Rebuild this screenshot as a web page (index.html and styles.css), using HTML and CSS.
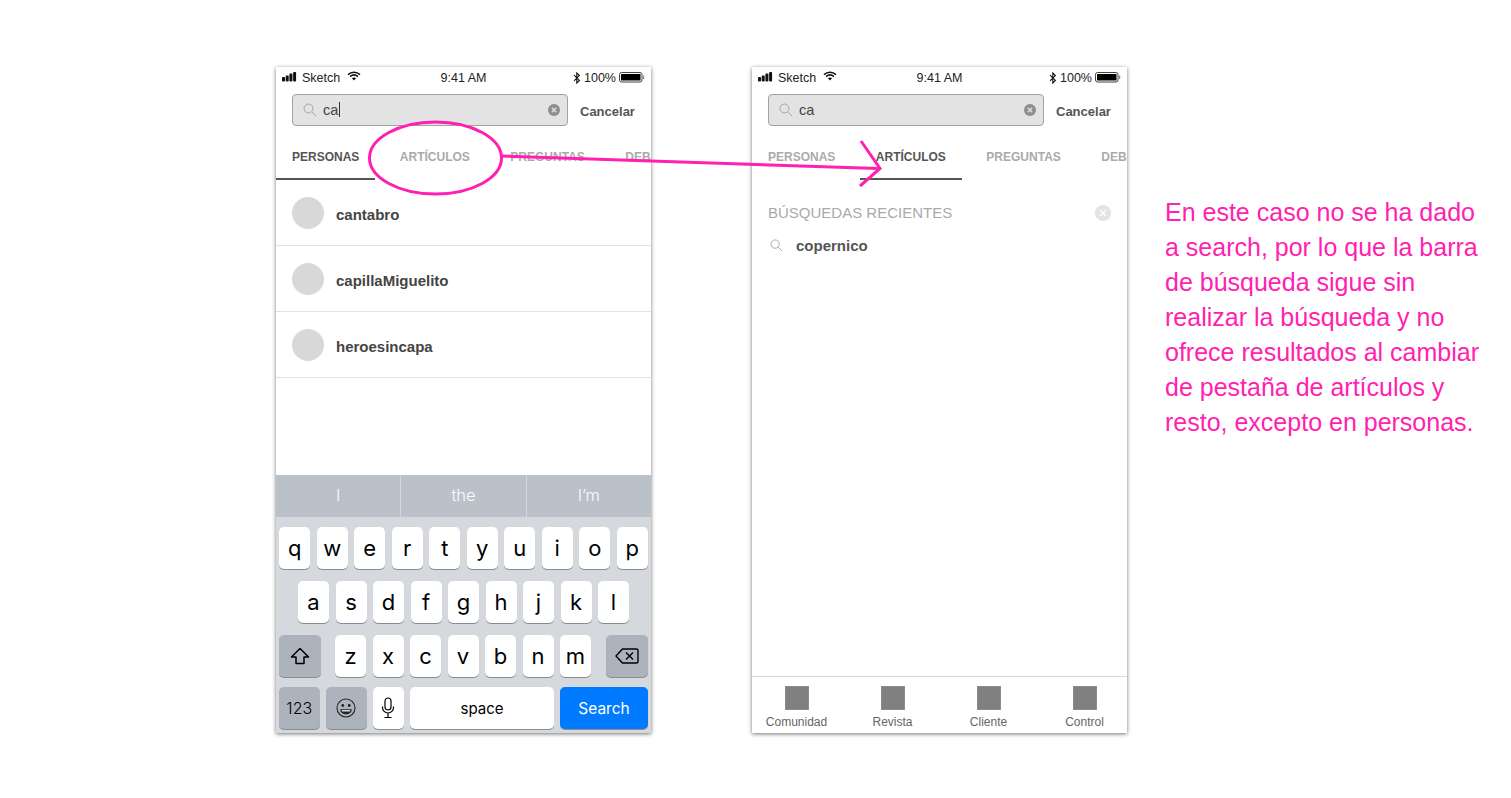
FILE: index.html
```html
<!DOCTYPE html>
<html lang="en">
<head>
    <meta charset="UTF-8">
    <title>Búsqueda</title>
    <link rel="stylesheet" href="styles.css">
</head>
<body>
    <div class="canvas">
        <section class="phone">
            <div class="status-bar">
                <div class="status-left">
                    <svg class="signal" viewBox="0 0 17 10" width="17" height="10"><rect x="0" y="5" width="3" height="4.500" rx="1"/><rect x="3.700" y="3.500" width="3" height="6" rx="1"/><rect x="7.400" y="1.500" width="3" height="8" rx="1"/><rect x="11.100" y="0" width="3" height="9.500" rx="1"/></svg>
                    <span>Sketch</span>
                    <svg class="wifi" viewBox="0 0 14 10" width="14" height="10"><path d="M1 3.600C4.400.5 9.600.5 13 3.600M3.100 5.600c2.300-2 5.500-2 7.800 0" fill="none" stroke="#111" stroke-width="1.500"/><path d="M4.900 7.200c1.300-1 2.900-1 4.200 0L7 9.600z" fill="#111"/></svg>
                </div>
                <span class="status-time">9:41 AM</span>
                <div class="status-right">
                    <svg viewBox="0 0 8 12" width="8" height="12"><path d="M1 3.200l5.400 5.200L3.800 11V1l2.600 2.600L1 8.800" fill="none" stroke="#111" stroke-width="1.100"/></svg>
                    <span>100%</span>
                    <svg viewBox="0 0 26 11" width="26" height="11"><rect x=".5" y=".5" width="22.500" height="9.500" rx="2" fill="#fff" stroke="#444"/><rect x="2" y="2" width="19.500" height="6.500" fill="#000"/><rect x="24" y="3.500" width="1.200" height="3.500" fill="#888"/></svg>
                </div>
            </div>
            <div class="search-row">
                <div class="search-box">
                    <svg class="search-icon" viewBox="0 0 14 14" width="14" height="14"><circle cx="5.500" cy="5.500" r="4.500"/><path d="M8.800 8.800l4.400 4.400"/></svg>
                    <span class="search-text">ca<i class="caret"></i></span>
                    <svg class="clear-icon" viewBox="0 0 12 12" width="12" height="12"><circle cx="6" cy="6" r="6" fill="#8e8e8e"/><path d="M3.800 3.800l4.400 4.400M8.200 3.800l-4.400 4.400" stroke="#e3e3e3" stroke-width="1.300"/></svg>
                </div>
                <span class="cancel">Cancelar</span>
            </div>
            <nav class="tabs">
                <span class="tab active">PERSONAS</span>
                <span class="tab">ARTÍCULOS</span>
                <span class="tab">PREGUNTAS</span>
                <span class="tab">DEBATES</span>
            </nav>
            <ul class="people">
                <li class="person"><span class="avatar"></span>cantabro</li>
                <li class="person"><span class="avatar"></span>capillaMiguelito</li>
                <li class="person"><span class="avatar"></span>heroesincapa</li>
            </ul>
            <div class="keyboard">
                <div class="suggestions">
                    <span>I</span>
                    <span>the</span>
                    <span>I’m</span>
                </div>
                <div class="keys">
                    <div class="key-row">
                        <span class="key">q</span><span class="key">w</span><span class="key">e</span><span class="key">r</span><span class="key">t</span><span class="key">y</span><span class="key">u</span><span class="key">i</span><span class="key">o</span><span class="key">p</span>
                    </div>
                    <div class="key-row">
                        <span class="key">a</span><span class="key">s</span><span class="key">d</span><span class="key">f</span><span class="key">g</span><span class="key">h</span><span class="key">j</span><span class="key">k</span><span class="key">l</span>
                    </div>
                    <div class="key-row row-shift">
                        <span class="key dark wide">
                            <svg viewBox="0 0 20 18" width="20" height="18"><path d="M10 1.500L1.500 10H6v6.500h8V10h4.500z" fill="none" stroke="#000" stroke-width="1.500" stroke-linejoin="round"/></svg>
                        </span>
                        <div class="shift-letters">
                            <span class="key">z</span><span class="key">x</span><span class="key">c</span><span class="key">v</span><span class="key">b</span><span class="key">n</span><span class="key">m</span>
                        </div>
                        <span class="key dark wide">
                            <svg viewBox="0 0 24 16" width="24" height="16"><path d="M7.500 1h14a1.500 1.500 0 0 1 1.500 1.500v11a1.500 1.500 0 0 1-1.500 1.500h-14L1 8z" fill="none" stroke="#000" stroke-width="1.400" stroke-linejoin="round"/><path d="M11 4.500l7 7M18 4.500l-7 7" stroke="#000" stroke-width="1.400"/></svg>
                        </span>
                    </div>
                    <div class="key-row row-bottom">
                        <span class="key dark key-num">123</span>
                        <span class="key dark key-emoji">
                            <svg viewBox="0 0 20 20" width="20" height="20"><circle cx="10" cy="10" r="9" fill="none" stroke="#222" stroke-width="1.100"/><circle cx="6.800" cy="7.500" r="1.400" fill="#222"/><circle cx="13.200" cy="7.500" r="1.400" fill="#222"/><path d="M4.300 11.200h11.400c0 3.200-2.500 5-5.700 5s-5.700-1.800-5.700-5z" fill="#222"/><path d="M5.600 12h8.800l-.5 1.400H6.100z" fill="#d8dade"/></svg>
                        </span>
                        <span class="key key-mic">
                            <svg viewBox="0 0 14 22" width="14" height="22"><rect x="4" y="1" width="6" height="12" rx="3" fill="none" stroke="#000" stroke-width="1.200"/><path d="M1.500 9.500v1a5.500 5.500 0 0 0 11 0v-1M7 16v4.500M3.500 20.500h7" fill="none" stroke="#000" stroke-width="1.200"/></svg>
                        </span>
                        <span class="key key-space">space</span>
                        <span class="key key-search">Search</span>
                    </div>
                </div>
            </div>
        </section>

        <section class="phone phone-right">
            <div class="status-bar">
                <div class="status-left">
                    <svg class="signal" viewBox="0 0 17 10" width="17" height="10"><rect x="0" y="5" width="3" height="4.500" rx="1"/><rect x="3.700" y="3.500" width="3" height="6" rx="1"/><rect x="7.400" y="1.500" width="3" height="8" rx="1"/><rect x="11.100" y="0" width="3" height="9.500" rx="1"/></svg>
                    <span>Sketch</span>
                    <svg class="wifi" viewBox="0 0 14 10" width="14" height="10"><path d="M1 3.600C4.400.5 9.600.5 13 3.600M3.100 5.600c2.300-2 5.500-2 7.800 0" fill="none" stroke="#111" stroke-width="1.500"/><path d="M4.900 7.200c1.300-1 2.900-1 4.200 0L7 9.600z" fill="#111"/></svg>
                </div>
                <span class="status-time">9:41 AM</span>
                <div class="status-right">
                    <svg viewBox="0 0 8 12" width="8" height="12"><path d="M1 3.200l5.400 5.200L3.800 11V1l2.600 2.600L1 8.800" fill="none" stroke="#111" stroke-width="1.100"/></svg>
                    <span>100%</span>
                    <svg viewBox="0 0 26 11" width="26" height="11"><rect x=".5" y=".5" width="22.500" height="9.500" rx="2" fill="#fff" stroke="#444"/><rect x="2" y="2" width="19.500" height="6.500" fill="#000"/><rect x="24" y="3.500" width="1.200" height="3.500" fill="#888"/></svg>
                </div>
            </div>
            <div class="search-row">
                <div class="search-box">
                    <svg class="search-icon" viewBox="0 0 14 14" width="14" height="14"><circle cx="5.500" cy="5.500" r="4.500"/><path d="M8.800 8.800l4.400 4.400"/></svg>
                    <span class="search-text">ca</span>
                    <svg class="clear-icon" viewBox="0 0 12 12" width="12" height="12"><circle cx="6" cy="6" r="6" fill="#8e8e8e"/><path d="M3.800 3.800l4.400 4.400M8.200 3.800l-4.400 4.400" stroke="#e3e3e3" stroke-width="1.300"/></svg>
                </div>
                <span class="cancel">Cancelar</span>
            </div>
            <nav class="tabs">
                <span class="tab">PERSONAS</span>
                <span class="tab active">ARTÍCULOS</span>
                <span class="tab">PREGUNTAS</span>
                <span class="tab">DEBATES</span>
            </nav>
            <div class="recent">
                <div class="recent-head">
                    <span>BÚSQUEDAS RECIENTES</span>
                    <svg viewBox="0 0 16 16" width="16" height="16"><circle cx="8" cy="8" r="8" fill="#e3e3e3"/><path d="M5 5l6 6M11 5l-6 6" stroke="#fff" stroke-width="1.300"/></svg>
                </div>
                <div class="recent-item">
                    <svg class="search-icon" viewBox="0 0 14 14" width="13" height="13"><circle cx="5.500" cy="5.500" r="4.500"/><path d="M8.800 8.800l4.400 4.400"/></svg>
                    <span>copernico</span>
                </div>
            </div>
            <div class="tabbar">
                <div class="tabbar-item"><span class="tabbar-icon"></span>Comunidad</div>
                <div class="tabbar-item"><span class="tabbar-icon"></span>Revista</div>
                <div class="tabbar-item"><span class="tabbar-icon"></span>Cliente</div>
                <div class="tabbar-item"><span class="tabbar-icon"></span>Control</div>
            </div>
        </section>

        <p class="note">En este caso no se ha dado a search, por lo que la barra de búsqueda sigue sin realizar la búsqueda y no ofrece resultados al cambiar de pestaña de artículos y resto, excepto en personas.</p>

        <!-- hand drawn annotation over the artboards -->
        <svg class="markup" viewBox="0 0 1511 798" width="1511" height="798">
            <ellipse cx="435.500" cy="158" rx="66" ry="36"/>
            <path d="M502 156L878 168.500M861 141L880 168.500L860 186"/>
        </svg>
    </div>
</body>
</html>
```

FILE: styles.css
```css
html, body {
    margin: 0;
    background-color: #fff;
}

body {
    width: 1511px;
    height: 798px;
    overflow: hidden;
    font-family: 'Liberation Sans', sans-serif;
}

.canvas {
    position: relative;
    display: flex;
    align-items: flex-start;
    height: 798px;
    box-sizing: border-box;
    padding: 67px 0 0 276px;
}

.phone {
    display: flex;
    flex-direction: column;
    flex: none;
    width: 375px;
    height: 666px;
    overflow: hidden;
    background-color: #fff;
    box-shadow: 0 1px 4px rgba(0, 0, 0, 0.55);
}

.phone-right {
    margin-left: 101px;
}

/* status bar */
.status-bar {
    display: flex;
    justify-content: space-between;
    align-items: center;
    position: relative;
    height: 20px;
    padding: 1px 6px 0;
    box-sizing: border-box;
    font-size: 12.500px;
    color: #222;
}

.status-left,
.status-right {
    display: flex;
    align-items: center;
}

.signal {
    fill: #111;
    margin-right: 3px;
    margin-bottom: 2px;
}

.wifi {
    margin-left: 7px;
    margin-bottom: 3px;
}

.status-time {
    position: absolute;
    left: 0;
    right: 0;
    text-align: center;
}

.status-right span {
    margin: 0 3px 0 3px;
}

/* search */
.search-row {
    display: flex;
    align-items: center;
    padding: 7px 16px 0;
}

.search-box {
    display: flex;
    align-items: center;
    box-sizing: border-box;
    width: 276px;
    height: 32px;
    padding: 0 7px 0 10px;
    background-color: #e3e3e3;
    border: 1px solid #a3a3a3;
    border-radius: 4px;
}

.search-icon {
    flex: none;
    fill: none;
    stroke: #a5a5a5;
    stroke-width: 1;
}

.search-text {
    flex: 1;
    margin-left: 6px;
    font-size: 14.500px;
    color: #444;
}

.caret {
    display: inline-block;
    width: 1px;
    height: 15px;
    margin-left: 1px;
    vertical-align: -2px;
    background-color: #333;
}

.cancel {
    margin-left: 12px;
    padding-top: 2px;
    font-size: 13px;
    font-weight: bold;
    color: #555;
}

/* tabs */
.tabs {
    display: flex;
    flex: none;
    gap: 8.500px;
    height: 54px;
    box-sizing: border-box;
    white-space: nowrap;
}

.tab {
    flex: none;
    padding: 24px 16px 0;
    font-size: 12px;
    font-weight: bold;
    color: #aaa;
}

.tab.active {
    color: #555;
    border-bottom: 2px solid #555;
}

/* people list */
.people {
    flex: 1;
    margin: 0;
    padding: 0;
    list-style: none;
}

.person {
    display: flex;
    align-items: center;
    box-sizing: border-box;
    height: 66px;
    padding: 4px 16px 0;
    font-size: 15px;
    font-weight: bold;
    color: #444;
    border-bottom: 1px solid #e2e2e2;
}

.avatar {
    width: 32px;
    height: 32px;
    margin-right: 12px;
    margin-bottom: 3px;
    background-color: #d8d8d8;
    border-radius: 50%;
}

/* keyboard */
.keyboard {
    flex: none;
    height: 258px;
    background-color: #d5d8dd;
    font-family: Inter, sans-serif;
}

.suggestions {
    display: flex;
    height: 42px;
    padding-bottom: 2px;
    box-sizing: border-box;
    background-color: #bbc1c9;
    color: #fbfbfc;
    font-size: 16.500px;
    font-weight: 300;
}

.suggestions span {
    flex: 1;
    display: flex;
    align-items: center;
    justify-content: center;
    margin-bottom: -2px;
    padding-bottom: 2px;
    border-left: 1px solid #d5d8dd;
}

.suggestions span:first-child {
    border-left: none;
}

.keys {
    display: flex;
    flex-direction: column;
    gap: 12px;
    padding: 10px 3px 0;
}

.key-row {
    display: flex;
    justify-content: center;
    gap: 6.500px;
}

.key {
    display: flex;
    align-items: center;
    justify-content: center;
    flex: none;
    width: 31px;
    height: 42px;
    background-color: #fff;
    border-radius: 5px;
    box-shadow: 0 1px 0 #888b90;
    font-size: 22px;
    color: #000;
}

.key.dark {
    background-color: #acb3bd;
}

.wide {
    width: 42px;
}

.row-shift {
    justify-content: space-between;
}

.shift-letters {
    display: flex;
    gap: 6.500px;
    margin-right: 1px;
}

.row-bottom {
    justify-content: flex-start;
    gap: 6px;
    margin-top: -2px;
}

.key-num {
    width: 40.500px;
    font-size: 16px;
    font-weight: 300;
}

.key-emoji {
    width: 41px;
}

.key.key-mic {
    width: 31.500px;
}

.key-space {
    width: 144px;
    font-size: 15px;
}

.key-search {
    width: 88px;
    background-color: #007aff;
    color: #fff;
    font-size: 15.500px;
}

/* recent searches */
.recent {
    flex: 1;
    padding: 24px 16px 0;
}

.recent-head {
    display: flex;
    justify-content: space-between;
    align-items: center;
    font-size: 15px;
    color: #aaa;
}

.recent-item {
    display: flex;
    align-items: center;
    margin-top: 16px;
    padding-left: 2px;
    font-size: 15px;
    font-weight: bold;
    color: #555;
}

.recent-item span {
    margin-left: 13px;
}

/* bottom navigation */
.tabbar {
    display: grid;
    grid-template-columns: repeat(4, 88px);
    gap: 8px;
    flex: none;
    height: 57px;
    padding-left: 0.500px;
    box-sizing: border-box;
    border-top: 1px solid #d8d8d8;
}

.tabbar-item {
    display: flex;
    flex-direction: column;
    align-items: center;
    padding-top: 9px;
    font-size: 12px;
    color: #666;
    white-space: nowrap;
}

.tabbar-icon {
    width: 24px;
    height: 24px;
    margin-bottom: 5px;
    box-sizing: border-box;
    background-color: #808080;
    border: 1px solid #8c8c8c;
}

/* annotation */
.note {
    flex: none;
    width: 320px;
    margin: 128px 0 0 38px;
    font-size: 25px;
    line-height: 35px;
    color: #ff22b0;
}

.markup {
    position: absolute;
    top: 0;
    left: 0;
    fill: none;
    stroke: #ff1fb0;
    stroke-width: 3;
    pointer-events: none;
}
```
